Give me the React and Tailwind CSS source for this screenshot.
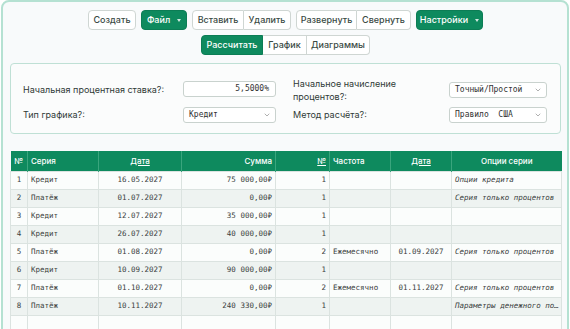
import React from "react";
import { ChevronDown } from "lucide-react";

const sans = "font-['Inter','Liberation_Sans',sans-serif]";
const mono = "font-['DejaVu_Sans_Mono','Liberation_Mono',monospace]";

const rows = [
  { n: 1, series: "Кредит", date: "16.05.2027", sum: "75 000,00₽", count: 1, freq: "", date2: "", opts: "Опции кредита" },
  { n: 2, series: "Платёж", date: "01.07.2027", sum: "0,00₽", count: 1, freq: "", date2: "", opts: "Серия только процентов" },
  { n: 3, series: "Кредит", date: "12.07.2027", sum: "35 000,00₽", count: 1, freq: "", date2: "", opts: "" },
  { n: 4, series: "Кредит", date: "26.07.2027", sum: "40 000,00₽", count: 1, freq: "", date2: "", opts: "" },
  { n: 5, series: "Платёж", date: "01.08.2027", sum: "0,00₽", count: 2, freq: "Ежемесячно", date2: "01.09.2027", opts: "Серия только процентов" },
  { n: 6, series: "Кредит", date: "10.09.2027", sum: "90 000,00₽", count: 1, freq: "", date2: "", opts: "" },
  { n: 7, series: "Платёж", date: "01.10.2027", sum: "0,00₽", count: 2, freq: "Ежемесячно", date2: "01.11.2027", opts: "Серия только процентов" },
  { n: 8, series: "Платёж", date: "10.11.2027", sum: "240 330,00₽", count: 1, freq: "", date2: "", opts: "Параметры денежного потока" },
];

function Caret() {
  return (
    <span className="ml-[7px] inline-block w-0 h-0 border-l-[2.5px] border-r-[2.5px] border-t-[3px] border-l-transparent border-r-transparent border-t-white/80" />
  );
}

function Btn({ children, green, className = "" }) {
  return (
    <button
      className={`h-[20px] px-[8px] text-[9px] font-medium flex items-center ${
        green
          ? "bg-[#0e8a5e] text-white border border-[#0c7d55]"
          : "bg-white text-[#3a4a44] border border-[#cfd6d3]"
      } ${className}`}
    >
      {children}
    </button>
  );
}

function Select({ value, width }) {
  return (
    <div
      className={`${width} h-[16px] bg-white border border-[#c9d2ce] rounded-[3px] flex items-center justify-between pl-[5px] pr-[4px]`}
    >
      <span className={`${mono} text-[8px] text-[#333] whitespace-pre`}>{value}</span>
      <ChevronDown size={8} className="text-[#888]" />
    </div>
  );
}

export default function App() {
  return (
    <div className={`${sans} w-[570px] h-[329px] overflow-hidden bg-white`}>
      <div className="mx-[1px] mt-[0px] h-[340px] border-2 border-[#b5e1d2] rounded-lg bg-[#f8fafb] pl-[7px] pr-[6px] pt-[8px]">
        {/* Toolbar */}
        <div className="flex justify-center gap-[5px]">
          <Btn className="rounded-[4px] w-[48px] justify-center">Создать</Btn>
          <Btn green className="rounded-[4px] w-[46px] justify-center">
            Файл
            <Caret />
          </Btn>
          <div className="flex">
            <Btn className="rounded-l-[4px] w-[52px] justify-center">Вставить</Btn>
            <Btn className="rounded-r-[4px] border-l-0 w-[47px] justify-center">Удалить</Btn>
          </div>
          <div className="flex">
            <Btn className="rounded-l-[4px] w-[61px] justify-center">Развернуть</Btn>
            <Btn className="rounded-r-[4px] border-l-0 w-[54px] justify-center">Свернуть</Btn>
          </div>
          <Btn green className="rounded-[4px] w-[67px] justify-center">
            Настройки
            <Caret />
          </Btn>
        </div>
        <div className="flex justify-center mt-[5px]">
          <Btn green className="rounded-l-[4px] w-[62px] justify-center">Рассчитать</Btn>
          <Btn className="border-l-0 w-[44px] justify-center">График</Btn>
          <Btn className="rounded-r-[4px] border-l-0 w-[63px] justify-center">Диаграммы</Btn>
        </div>

        {/* Settings */}
        <div className="mt-[8px] h-[71px] border border-[#bfe0d5] rounded-[4px] bg-[#fbfcfc] pl-[12px] pt-[12px] text-[9px] text-[#2f3a36]">
          <div className="flex items-center h-[28px]">
            <div className="w-[160px]">Начальная процентная ставка?:</div>
            <div className={`${mono} w-[93px] h-[16px] mb-[3px] bg-white border border-[#c9d2ce] rounded-[3px] text-[8px] text-[#333] flex items-center justify-end pr-[6px]`}>
              5,5000%
            </div>
            <div className="w-[156px] ml-[17px] leading-[13px]">
              Начальное начисление
              <br />
              процентов?:
            </div>
            <Select value="Точный/Простой" width="w-[98px]" />
          </div>
          <div className="flex items-center h-[18px] mt-[2px]">
            <div className="w-[160px]">Тип графика?:</div>
            <Select value="Кредит" width="w-[93px]" />
            <div className="w-[156px] ml-[17px]">Метод расчёта?:</div>
            <Select value="Правило  США" width="w-[98px]" />
          </div>
        </div>

        {/* Table */}
        <table className="mt-[17px] w-[551px] table-fixed border-collapse">
          <colgroup>
            <col className="w-[17px]" />
            <col className="w-[71px]" />
            <col className="w-[83px]" />
            <col className="w-[94px]" />
            <col className="w-[54px]" />
            <col className="w-[61px]" />
            <col className="w-[61px]" />
            <col className="w-[110px]" />
          </colgroup>
          <thead>
            <tr className="h-[20px] bg-[#0e8a5e] text-white text-[8px]">
              <th className="border-r border-[#3aa57d] text-center font-medium">№</th>
              <th className="border-r border-[#3aa57d] text-left pl-[3px] font-medium">Серия</th>
              <th className="border-r border-[#3aa57d] text-center font-medium underline">Дата</th>
              <th className="border-r border-[#3aa57d] text-right pr-[3px] font-medium">Сумма</th>
              <th className="border-r border-[#3aa57d] text-right pr-[3px] font-medium underline">№</th>
              <th className="border-r border-[#3aa57d] text-left pl-[3px] font-medium">Частота</th>
              <th className="border-r border-[#3aa57d] text-center font-medium underline">Дата</th>
              <th className="text-center font-medium">Опции серии</th>
            </tr>
          </thead>
          <tbody className={`${mono} text-[7.5px] text-[#3b3f3e]`}>
            {rows.map((r, i) => (
              <tr key={r.n} className={`h-[18px] ${i % 2 ? "bg-[#eef3f1]" : "bg-[#fbfdfc]"}`}>
                <td className="border border-[#dbe3e0] text-center">{r.n}</td>
                <td className="border border-[#dbe3e0] pl-[3px]">{r.series}</td>
                <td className="border border-[#dbe3e0] text-center">{r.date}</td>
                <td className="border border-[#dbe3e0] text-right pr-[3px]">{r.sum}</td>
                <td className="border border-[#dbe3e0] text-right pr-[3px]">{r.count}</td>
                <td className="border border-[#dbe3e0] pl-[3px]">{r.freq}</td>
                <td className="border border-[#dbe3e0] text-center">{r.date2}</td>
                <td className="border border-[#dbe3e0] pl-[3px] italic truncate">{r.opts}</td>
              </tr>
            ))}
            <tr className="h-[18px] bg-[#fbfdfc]">
              {Array.from({ length: 8 }).map((_, i) => (
                <td key={i} className="border border-[#dbe3e0]" />
              ))}
            </tr>
          </tbody>
        </table>
      </div>
    </div>
  );
}
